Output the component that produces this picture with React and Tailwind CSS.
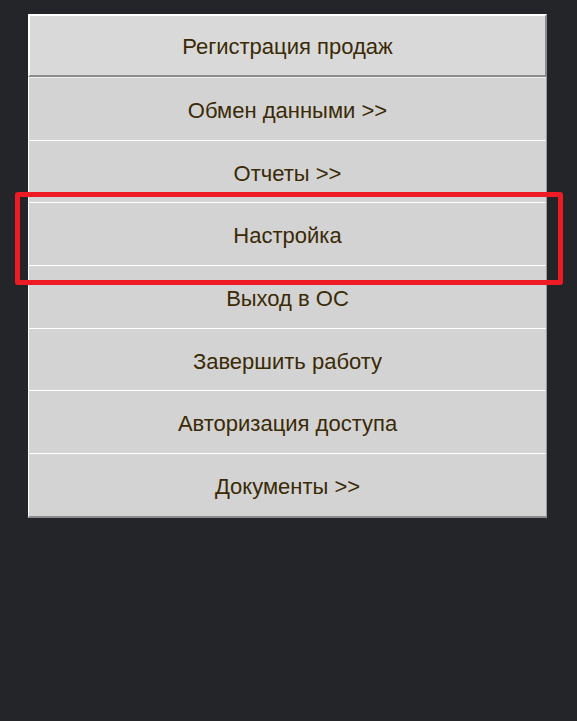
import React from "react";

const items = [
  "Обмен данными >>",
  "Отчеты >>",
  "Настройка",
  "Выход в ОС",
  "Завершить работу",
  "Авторизация доступа",
  "Документы >>",
];

export default function App() {
  return (
    <div
      className="relative min-h-[721px] w-full bg-[#232529] pt-[14px]"
      style={{ fontFamily: '"Liberation Sans", Arial, sans-serif' }}
    >
      <div className="ml-[28px] w-[519px]">
        <button className="flex h-[63px] w-full items-center justify-center border-2 border-t-white border-l-white border-r-[#8a8a8a] border-b-[#8a8a8a] bg-[#d9d9d9] pt-[2px] text-[22px] text-[#3a2a06]">
          Регистрация продаж
        </button>
        <div className="border-l border-b-2 border-r border-l-white border-r-[#9a9a9a] border-b-[#8a8a8a] bg-[#d3d3d3]">
          {items.map((label, i) => (
            <div
              key={label}
              className={
                "flex h-[62.7px] items-center justify-center border-t border-white pt-[3px] text-[22px] text-[#3a2a06]" +
                (i === 0 ? " border-t-[#f0f0f0]" : "")
              }
            >
              {label}
            </div>
          ))}
        </div>
      </div>
      {/* highlight annotation */}
      <div className="absolute left-[15px] top-[192px] h-[93px] w-[548px] rounded-[3px] border-[5px] border-[#ed1c24]" />
    </div>
  );
}
